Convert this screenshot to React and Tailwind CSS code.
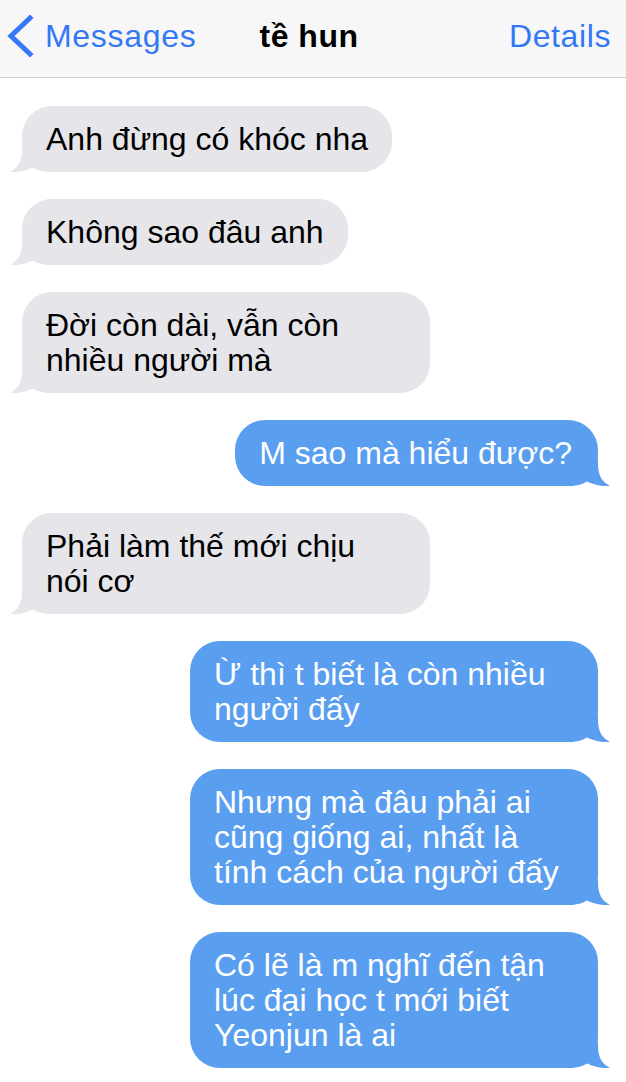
import React from 'react';

const messages = [
  { from: 'them', lines: ['Anh đừng có khóc nha'] },
  { from: 'them', lines: ['Không sao đâu anh'] },
  { from: 'them', lines: ['Đời còn dài, vẫn còn', 'nhiều người mà'] },
  { from: 'me', lines: ['M sao mà hiểu được?'] },
  { from: 'them', lines: ['Phải làm thế mới chịu', 'nói cơ'] },
  { from: 'me', lines: ['Ừ thì t biết là còn nhiều', 'người đấy'] },
  { from: 'me', lines: ['Nhưng mà đâu phải ai', 'cũng giống ai, nhất là', 'tính cách của người đấy'] },
  { from: 'me', lines: ['Có lẽ là m nghĩ đến tận', 'lúc đại học t mới biết', 'Yeonjun là ai'] },
];

const Tail = ({ side, color }) => (
  <svg
    width="44"
    height="26"
    viewBox="0 0 44 26"
    className={
      side === 'left'
        ? 'absolute bottom-0 left-[-12px]'
        : 'absolute bottom-0 right-[-12px] -scale-x-100'
    }
  >
    <path
      d="M12 0 L12 4 C12 15 8 22 0 26 C8 26.5 16 25 23 21.5 C28 24.5 33 26 44 26 L44 0 Z"
      fill={color}
    />
  </svg>
);

const Bubble = ({ from, lines }) => {
  const mine = from === 'me';
  const multi = lines.length > 1;
  return (
    <div className={mine ? 'flex justify-end' : 'flex justify-start'}>
      <div
        className={[
          'relative rounded-[30px] py-[15.5px] text-[32px] leading-[35px]',
          multi ? 'w-[408px]' : '',
          mine ? 'bg-[#5a9ef0] text-white pl-6 pr-[26px]' : 'bg-[#e5e5ea] text-black px-6',
        ].join(' ')}
      >
        <Tail side={mine ? 'right' : 'left'} color={mine ? '#5a9ef0' : '#e5e5ea'} />
        <span className="relative block">
          {lines.map((l, i) => (
            <span key={i} className="block whitespace-nowrap">
              {l}
            </span>
          ))}
        </span>
      </div>
    </div>
  );
};

export default function App() {
  return (
    <div
      className="w-[626px] h-[1082px] overflow-hidden bg-white"
      style={{ fontFamily: '"Liberation Sans", "Noto Sans", Arial, sans-serif' }}
    >
      <header className="grid h-[78px] grid-cols-[1fr_auto_1fr] items-center border-b border-[#cfcfd3] bg-[#f7f7f7] pb-[6px] pl-[7px] pr-[15px] text-[32px]">
        <div className="flex items-center text-[#3478f6]">
          <svg width="27" height="42" viewBox="0 0 27 42" className="mt-[1px]">
            <polyline
              points="23,3 4,21 23,39"
              fill="none"
              stroke="#3478f6"
              strokeWidth="5"
              strokeLinecap="square"
              strokeLinejoin="miter"
            />
          </svg>
          <span className="ml-[11px] tracking-[0.7px]">Messages</span>
        </div>
        <div className="font-bold text-black tracking-[0.5px]">tề hun</div>
        <div className="text-right text-[#3478f6] tracking-[0.6px]">Details</div>
      </header>

      <main className="flex flex-col gap-[27px] pl-[22px] pr-[28px] pt-[28px]">
        {messages.map((m, i) => (
          <Bubble key={i} {...m} />
        ))}
      </main>
    </div>
  );
}
